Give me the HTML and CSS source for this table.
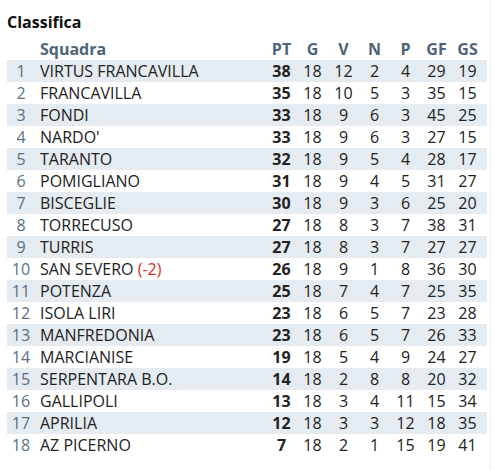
FILE: index.html
```html
<!DOCTYPE html>
<html lang="it">
<head>
<meta charset="utf-8">
<title>Classifica</title>
<link rel="stylesheet" href="styles.css">
</head>
<body>
<div class="widget">
  <h2 class="title">Classifica</h2>
  <table class="standings">
    <colgroup>
      <col class="c-pos"><col class="c-team"><col class="c-num"><col class="c-num"><col class="c-num"><col class="c-num"><col class="c-num"><col class="c-num"><col class="c-last">
    </colgroup>
    <thead>
      <tr><th></th><th class="team">Squadra</th><th>PT</th><th>G</th><th>V</th><th>N</th><th>P</th><th>GF</th><th class="last">GS</th></tr>
    </thead>
    <tbody>
      <tr><td class="pos">1</td><td class="team">VIRTUS FRANCAVILLA</td><td class="pt">38</td><td>18</td><td>12</td><td>2</td><td>4</td><td>29</td><td class="last">19</td></tr>
      <tr><td class="pos">2</td><td class="team">FRANCAVILLA</td><td class="pt">35</td><td>18</td><td>10</td><td>5</td><td>3</td><td>35</td><td class="last">15</td></tr>
      <tr><td class="pos">3</td><td class="team">FONDI</td><td class="pt">33</td><td>18</td><td>9</td><td>6</td><td>3</td><td>45</td><td class="last">25</td></tr>
      <tr><td class="pos">4</td><td class="team">NARDO'</td><td class="pt">33</td><td>18</td><td>9</td><td>6</td><td>3</td><td>27</td><td class="last">15</td></tr>
      <tr><td class="pos">5</td><td class="team">TARANTO</td><td class="pt">32</td><td>18</td><td>9</td><td>5</td><td>4</td><td>28</td><td class="last">17</td></tr>
      <tr><td class="pos">6</td><td class="team">POMIGLIANO</td><td class="pt">31</td><td>18</td><td>9</td><td>4</td><td>5</td><td>31</td><td class="last">27</td></tr>
      <tr><td class="pos">7</td><td class="team">BISCEGLIE</td><td class="pt">30</td><td>18</td><td>9</td><td>3</td><td>6</td><td>25</td><td class="last">20</td></tr>
      <tr><td class="pos">8</td><td class="team">TORRECUSO</td><td class="pt">27</td><td>18</td><td>8</td><td>3</td><td>7</td><td>38</td><td class="last">31</td></tr>
      <tr><td class="pos">9</td><td class="team">TURRIS</td><td class="pt">27</td><td>18</td><td>8</td><td>3</td><td>7</td><td>27</td><td class="last">27</td></tr>
      <tr><td class="pos">10</td><td class="team">SAN SEVERO <span class="penalty">(-2)</span></td><td class="pt">26</td><td>18</td><td>9</td><td>1</td><td>8</td><td>36</td><td class="last">30</td></tr>
      <tr><td class="pos">11</td><td class="team">POTENZA</td><td class="pt">25</td><td>18</td><td>7</td><td>4</td><td>7</td><td>25</td><td class="last">35</td></tr>
      <tr><td class="pos">12</td><td class="team">ISOLA LIRI</td><td class="pt">23</td><td>18</td><td>6</td><td>5</td><td>7</td><td>23</td><td class="last">28</td></tr>
      <tr><td class="pos">13</td><td class="team">MANFREDONIA</td><td class="pt">23</td><td>18</td><td>6</td><td>5</td><td>7</td><td>26</td><td class="last">33</td></tr>
      <tr><td class="pos">14</td><td class="team">MARCIANISE</td><td class="pt">19</td><td>18</td><td>5</td><td>4</td><td>9</td><td>24</td><td class="last">27</td></tr>
      <tr><td class="pos">15</td><td class="team">SERPENTARA B.O.</td><td class="pt">14</td><td>18</td><td>2</td><td>8</td><td>8</td><td>20</td><td class="last">32</td></tr>
      <tr><td class="pos">16</td><td class="team">GALLIPOLI</td><td class="pt">13</td><td>18</td><td>3</td><td>4</td><td>11</td><td>15</td><td class="last">34</td></tr>
      <tr><td class="pos">17</td><td class="team">APRILIA</td><td class="pt">12</td><td>18</td><td>3</td><td>3</td><td>12</td><td>18</td><td class="last">35</td></tr>
      <tr><td class="pos">18</td><td class="team">AZ PICERNO</td><td class="pt">7</td><td>18</td><td>2</td><td>1</td><td>15</td><td>19</td><td class="last">41</td></tr>
    </tbody>
  </table>
</div>
</body>
</html>
```

FILE: styles.css
```css
html, body {
  margin: 0;
  padding: 0;
  background: #ffffff;
}

body {
  font-family: "Open Sans", "DejaVu Sans", sans-serif;
  color: #222222;
}

.widget {
  width: 483px;
  padding: 9px 0 0 7px;
  border-right: 1px solid #eeeeee;
  min-height: 461px;
}

.title {
  margin: 0;
  font-size: 16px;
  font-weight: 700;
  line-height: 26px;
  color: #111111;
}

.standings {
  width: 480px;
  border-collapse: collapse;
  table-layout: fixed;
  font-size: 16px;
}

.c-pos { width: 28px; }
.c-num { width: 31px; }
.c-last { width: 35px; }

.standings th,
.standings td {
  padding: 0;
  height: 22px;
  line-height: 22px;
  text-align: center;
  white-space: nowrap;
}

.standings .last {
  padding-right: 4px;
}

.standings th {
  font-weight: 700;
  color: #4d6479;
  height: 25px;
  vertical-align: bottom;
}

.standings .team {
  text-align: left;
  padding-left: 5px;
}

.standings tbody tr:nth-child(odd) {
  background: #e4ebf1;
}

.pos {
  color: #5b6f80;
}

.pt {
  font-weight: 700;
}

.penalty {
  color: #d42a2a;
}
```
